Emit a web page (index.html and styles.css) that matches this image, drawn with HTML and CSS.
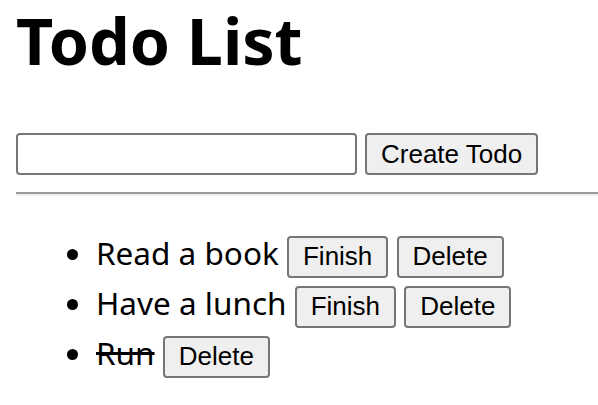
FILE: index.html
```html
<!DOCTYPE html>
<html>
<head>
<meta charset="utf-8">
<link rel="stylesheet" href="styles.css">
</head>
<body>
<h1 class="title">Todo List</h1>
<form class="new-todo">
<input class="todo-input" type="text">
<button class="btn" type="button">Create Todo</button>
</form>
<hr class="divider">
<ul class="todo-list">
<li class="todo-item"><span class="todo-text">Read a book</span> <button class="btn" type="button">Finish</button> <button class="btn" type="button">Delete</button></li>
<li class="todo-item"><span class="todo-text">Have a lunch</span> <button class="btn" type="button">Finish</button> <button class="btn" type="button">Delete</button></li>
<li class="todo-item"><span class="todo-text done">Run</span> <button class="btn" type="button">Delete</button></li>
</ul>
</body>
</html>
```
FILE: styles.css
```css
html, body {
  background: #fff;
}
body {
  margin: 0 0 0 16px;
  font-family: "Noto Sans", sans-serif;
  font-size: 31.5px;
  color: #000;
}
.title {
  margin: 0;
  font-size: 64.5px;
  font-weight: 700;
  line-height: 80px;
}
.new-todo {
  display: flex;
  gap: 8px;
  margin-top: 53px;
}
.todo-input {
  box-sizing: border-box;
  width: 341px;
  height: 42px;
  margin: 0;
  border: 2px solid #767676;
  border-radius: 4px;
  background: #fff;
  padding: 2px 4px;
  font-family: "Liberation Sans", Arial, sans-serif;
  font-size: 26px;
}
.btn {
  box-sizing: border-box;
  height: 42px;
  margin: 0;
  padding: 2px 14px;
  border: 2px solid #767676;
  border-radius: 4px;
  background: #efefef;
  color: #000;
  font-family: "Liberation Sans", Arial, sans-serif;
  font-size: 26px;
  line-height: normal;
}
.divider {
  margin: 17px 0 0;
  border: 0;
  border-top: 2px solid #9a9a9a;
  border-bottom: 2px solid #eee;
  height: 0;
}
.todo-list {
  margin: 32px 0 0;
  padding-left: 80px;
}
.todo-item {
  line-height: 50px;
  height: 50px;
}
.done {
  text-decoration: line-through;
}
```
